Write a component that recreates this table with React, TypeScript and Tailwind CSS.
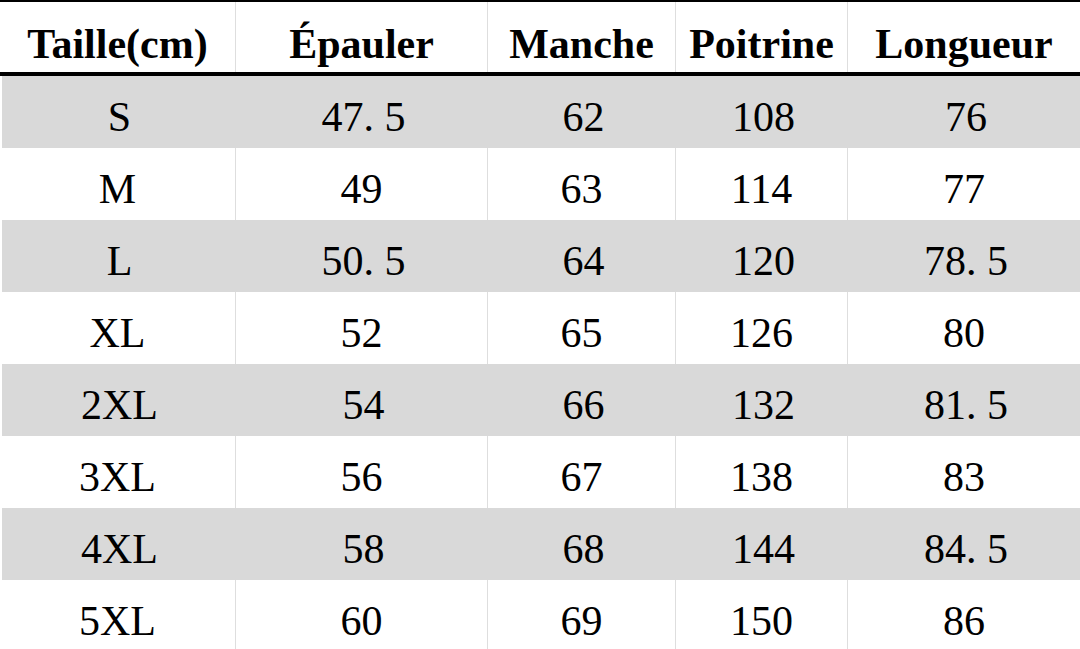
import React from 'react';

const headers = ['Taille(cm)', 'Épauler', 'Manche', 'Poitrine', 'Longueur'];

const rows = [
  ['S', '47. 5', '62', '108', '76'],
  ['M', '49', '63', '114', '77'],
  ['L', '50. 5', '64', '120', '78. 5'],
  ['XL', '52', '65', '126', '80'],
  ['2XL', '54', '66', '132', '81. 5'],
  ['3XL', '56', '67', '138', '83'],
  ['4XL', '58', '68', '144', '84. 5'],
  ['5XL', '60', '69', '150', '86'],
];

const cols = 'grid grid-cols-[235px_252px_188px_172px_233px]';

export default function App() {
  return (
    <div className="w-[1080px] h-[649px] overflow-hidden bg-white text-black font-['Liberation_Serif','Times_New_Roman',serif]">
      {/* header */}
      <div className={`${cols} border-t-2 border-b-4 border-black`}>
        {headers.map((h, i) => (
          <div
            key={h}
            className={`h-[70px] pt-[21px] text-center text-[42px] font-bold leading-none whitespace-nowrap ${i > 0 ? 'border-l border-[#dedede]' : ''}`}
          >
            {h}
          </div>
        ))}
      </div>

      {/* body */}
      {rows.map((r, ri) => {
        const gray = ri % 2 === 0;
        return (
          <div key={r[0]} className={`${cols} h-[72px] ${gray ? 'bg-[#d9d9d9] ml-[2px]' : 'bg-white'}`}>
            {r.map((c, ci) => (
              <div
                key={ci}
                className={`pt-[20px] text-center text-[42px] leading-none whitespace-pre ${
                  ci > 0 ? (gray ? 'border-l border-[#d9d9d9]' : 'border-l border-[#dedede]') : ''
                }`}
              >
                {c}
              </div>
            ))}
          </div>
        );
      })}
    </div>
  );
}
